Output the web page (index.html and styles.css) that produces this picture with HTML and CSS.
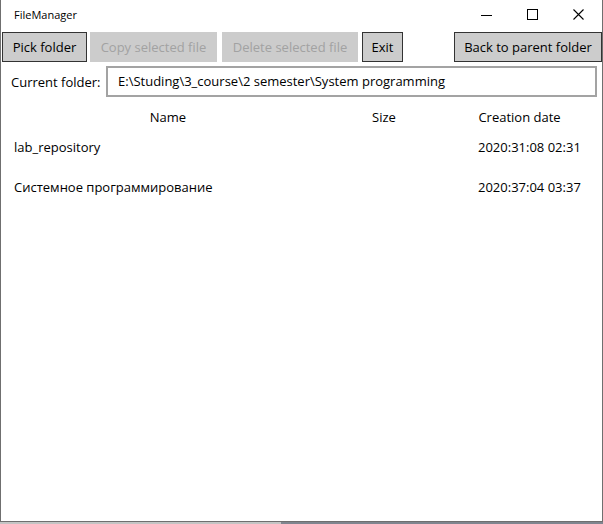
FILE: index.html
```html
<!DOCTYPE html>
<html>
<head>
<meta charset="utf-8">
<link rel="stylesheet" href="styles.css">
</head>
<body>
<div class="window">
  <div class="titlebar">
    <span class="title">FileManager</span>
    <div class="controls">
      <span class="ctl"><svg width="12" height="12" viewBox="0 0 12 12"><path d="M0 6.5H11" stroke="#000" stroke-width="1" fill="none"/></svg></span>
      <span class="ctl"><svg width="12" height="12" viewBox="0 0 12 12"><rect x="0.5" y="0.5" width="10" height="10" stroke="#000" stroke-width="1" fill="none"/></svg></span>
      <span class="ctl"><svg width="12" height="12" viewBox="0 0 12 12"><path d="M0.5 0.5L10.5 10.5M10.5 0.5L0.5 10.5" stroke="#000" stroke-width="1.1" fill="none"/></svg></span>
    </div>
  </div>
  <div class="toolbar">
    <button class="btn btn-pick">Pick folder</button>
    <button class="btn btn-copy" disabled>Copy selected file</button>
    <button class="btn btn-delete" disabled>Delete selected file</button>
    <button class="btn btn-exit">Exit</button>
    <button class="btn btn-back">Back to parent folder</button>
  </div>
  <div class="pathrow">
    <span class="label">Current folder:</span>
    <div class="pathbox">E:\Studing\3_course\2 semester\System programming</div>
  </div>
  <div class="list">
    <div class="head name">Name</div>
    <div class="head size">Size</div>
    <div class="head date">Creation date</div>

    <div class="cell name">lab_repository</div>
    <div class="cell size"></div>
    <div class="cell date">2020:31:08 02:31</div>

    <div class="cell name">Системное программирование</div>
    <div class="cell size"></div>
    <div class="cell date">2020:37:04 03:37</div>
  </div>
</div>
<div class="shadow"><div class="shadow-a"></div><div class="shadow-b"></div></div>
</body>
</html>
```
FILE: styles.css
```css
html, body {
  margin: 0;
  padding: 0;
  background: #ffffff;
}
body {
  font-family: "Open Sans", "Noto Sans", "DejaVu Sans", sans-serif;
  color: #000;
  width: 603px;
  height: 524px;
  overflow: hidden;
}
.window {
  box-sizing: border-box;
  width: 603px;
  height: 522px;
  border-left: 1px solid #6f6f6f;
  border-right: 1px solid #6f6f6f;
  border-bottom: 1px solid #6f6f6f;
  background: #fff;
  display: flex;
  flex-direction: column;
}
.titlebar {
  height: 32px;
  display: flex;
  align-items: center;
  justify-content: space-between;
}
.title {
  font-size: 11px;
  padding-left: 13px;
  padding-bottom: 3px;
}
.controls {
  display: flex;
  height: 32px;
  padding-bottom: 2px;
  box-sizing: border-box;
}
.ctl {
  width: 46px;
  display: flex;
  align-items: center;
  justify-content: center;
}
.ctl svg { display: block; }
.toolbar {
  display: flex;
  align-items: stretch;
  height: 30px;
  padding-left: 1px;
}
.btn {
  font-family: inherit;
  font-size: 13px;
  background: #cccccc;
  border: 1px solid #333333;
  color: #000;
  padding: 0;
  margin: 0;
  height: 30px;
  box-sizing: border-box;
}
.btn:disabled {
  border-color: #cccccc;
  color: #a2a2a2;
}
.btn-pick { width: 85px; }
.btn-copy { width: 127px; margin-left: 3px; }
.btn-delete { width: 136px; margin-left: 5px; }
.btn-exit { width: 41px; margin-left: 4px; }
.btn-back { width: 148px; margin-left: auto; }
.pathrow {
  display: flex;
  align-items: center;
  margin-top: 4px;
  height: 31px;
}
.label {
  font-size: 13px;
  padding-left: 10px;
  width: 95px;
}
.pathbox {
  box-sizing: border-box;
  width: 491px;
  height: 31px;
  border: 2px solid #a3a3a3;
  font-size: 13px;
  line-height: 27px;
  padding-left: 10px;
}
.list {
  display: grid;
  grid-template-columns: 334px 98px 1fr;
  grid-auto-rows: 40px;
  grid-template-rows: 30px;
  margin-top: 5px;
  font-size: 13px;
}
.head {
  text-align: center;
  line-height: 30px;
}
.head.date { padding-left: 4px; }
.cell {
  line-height: 30px;
}
.cell.name { padding-left: 13px; }
.cell.date { padding-left: 45px; }
.shadow {
  display: flex;
  height: 2px;
}
.shadow-a { width: 281px; background: #c4c4c4; }
.shadow-b { flex: 1; background: #80858f; }
```
